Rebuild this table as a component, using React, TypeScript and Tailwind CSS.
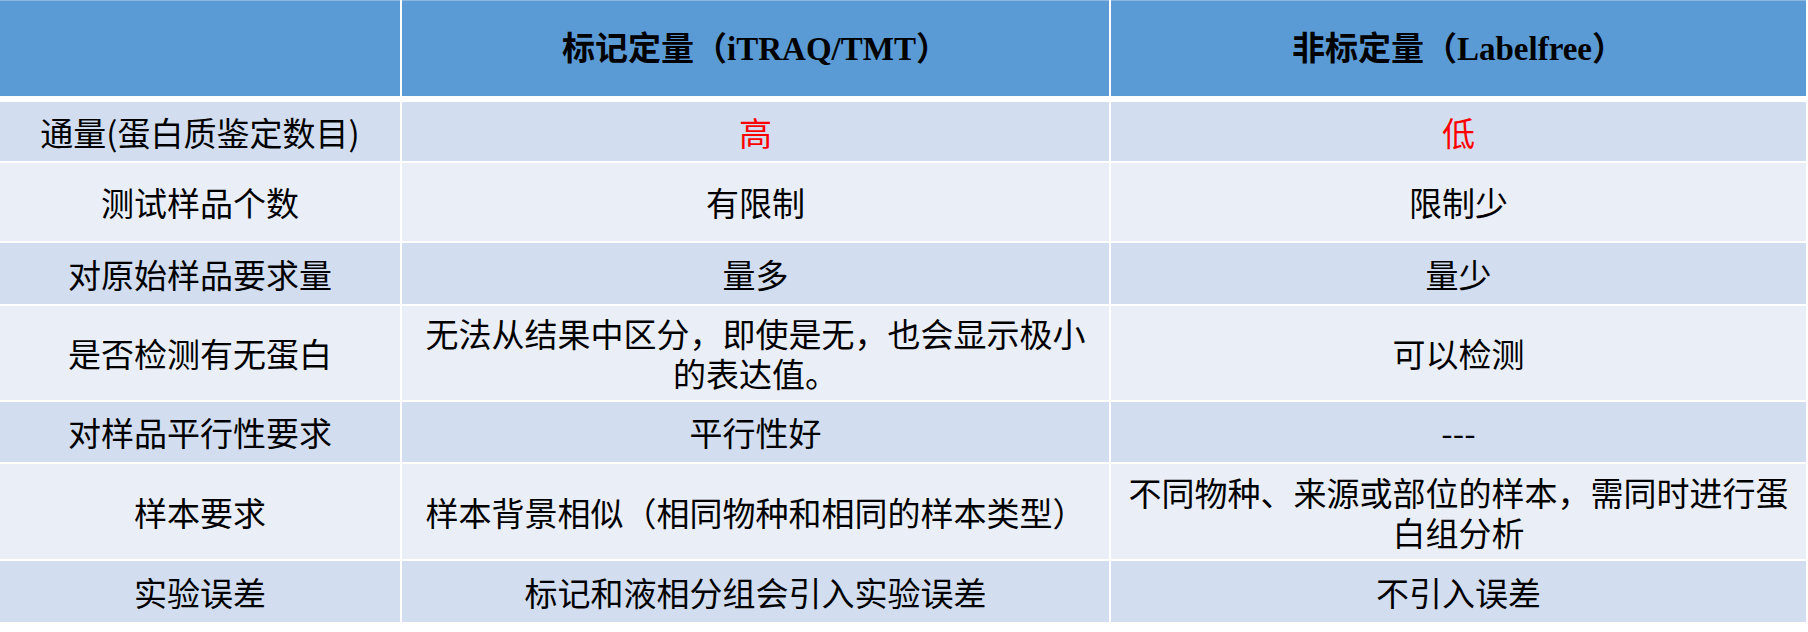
import React from 'react';

type Row = { label: string; a: string; b: string; h: string; red?: boolean };

const rows: Row[] = [
  { label: '通量(蛋白质鉴定数目)', a: '高', b: '低', h: 'h-[59px]', red: true },
  { label: '测试样品个数', a: '有限制', b: '限制少', h: 'h-[78px]' },
  { label: '对原始样品要求量', a: '量多', b: '量少', h: 'h-[61px]' },
  { label: '是否检测有无蛋白', a: '无法从结果中区分，即使是无，也会显示极小的表达值。', b: '可以检测', h: 'h-[94px]' },
  { label: '对样品平行性要求', a: '平行性好', b: '---', h: 'h-[60px]' },
  { label: '样本要求', a: '样本背景相似（相同物种和相同的样本类型）', b: '不同物种、来源或部位的样本，需同时进行蛋白组分析', h: 'h-[95px]' },
  { label: '实验误差', a: '标记和液相分组会引入实验误差', b: '不引入误差', h: 'h-[61px]' },
];

const cell = 'flex items-center justify-center text-center px-4';

export default function App() {
  return (
    <div
      className="w-[1808px] h-[632px] bg-white text-black text-[33px] leading-[40px]"
      style={{ fontFamily: '"Noto Sans CJK SC", "Liberation Sans", sans-serif' }}
    >
      <div className="flex flex-col gap-[2px] w-[1806px]">
        <div className="grid grid-cols-[400px_707px_695px] gap-[2px] h-[96px] mb-[4px]">
          <div className="bg-[#5b9bd5] border-t border-[#8db6e3]" />
          <div
            className={`${cell} bg-[#5b9bd5] border-t border-[#8db6e3] font-bold`}
            style={{ fontFamily: '"Liberation Serif", "Noto Sans CJK SC", serif' }}
          >
            标记定量（iTRAQ/TMT）
          </div>
          <div
            className={`${cell} bg-[#5b9bd5] border-t border-[#8db6e3] font-bold`}
            style={{ fontFamily: '"Liberation Serif", "Noto Sans CJK SC", serif' }}
          >
            非标定量（Labelfree）
          </div>
        </div>
        {rows.map((r, i) => {
          const bg = i % 2 === 0 ? 'bg-[#d2deef]' : 'bg-[#eaeff7]';
          return (
            <div key={r.label} className={`grid grid-cols-[400px_707px_695px] gap-[2px] ${r.h}`}>
              <div className={`${cell} ${bg}`}>{r.label}</div>
              <div className={`${cell} ${bg} ${r.red ? 'text-[#ff0000]' : ''}`}>{r.a}</div>
              <div className={`${cell} ${bg} ${r.red ? 'text-[#ff0000]' : ''}`}>{r.b}</div>
            </div>
          );
        })}
      </div>
    </div>
  );
}
